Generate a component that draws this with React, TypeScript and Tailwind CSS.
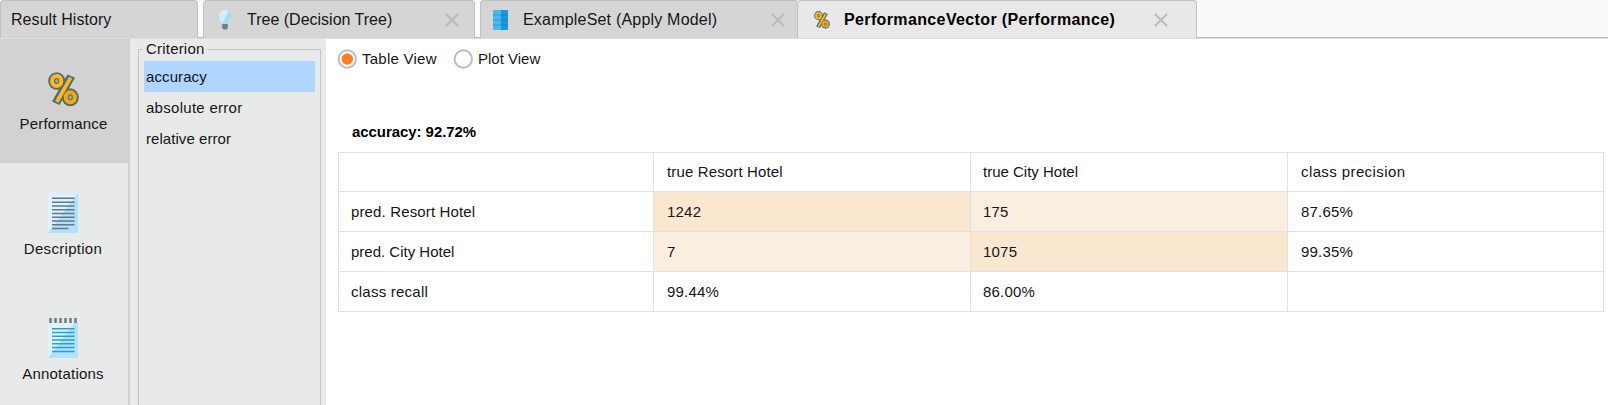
import React from "react";

const tabBase =
  "flex h-[38px] shrink-0 items-center rounded-t-[4px] border-x border-t border-[#c0c0c0] text-[16px] leading-[20px]";

function Bulb() {
  return (
    <svg width="14" height="22" viewBox="0 0 14 22">
      <path d="M7 1C3.400 1 1 3.500 1 7c0 2.700 1.500 4.300 2.500 6.300L4.200 16h5.600l.7-2.700C11.500 11.300 13 9.700 13 7c0-3.500-2.400-6-6-6z" fill="#a9dcf5" />
      <path d="M7 1C3.400 1 1 3.500 1 7c0 2.700 1.500 4.300 2.500 6.300L4 15 10.500 2C9.500 1.300 8.300 1 7 1z" fill="#d4effb" />
      <path d="M4.200 15h5.600v4L8.500 20.500h-3L4.200 19z" fill="#6d7e88" />
    </svg>
  );
}

function Sheet() {
  return (
    <svg width="15" height="20" viewBox="0 0 15 20">
      <path d="M0 0h8v20H0z" fill="#4db8ec" />
      <path d="M8 0h7v20H8z" fill="#1799dd" />
      <path d="M0 5h8M0 10h8M0 15h8" stroke="#2f9dd5" />
      <path d="M8 5h7M8 10h7M8 15h7" stroke="#0d86cb" />
    </svg>
  );
}

function Percent({ className }: { className: string }) {
  return (
    <svg className={className} viewBox="0 0 31 35" fill="none">
      <path d="M19.500 2.500l7.500 3.200L11.500 33l-7.500-3.500z" fill="#546b75" />
      <ellipse cx="8.700" cy="9" rx="8.500" ry="8.800" fill="#546b75" />
      <ellipse cx="22.300" cy="25.300" rx="8.500" ry="9" fill="#546b75" />
      <path d="M21 4.800l3.300 1.700L10.500 30.700l-3.300-1.700z" fill="#f9b91f" />
      <ellipse cx="8.700" cy="9" rx="4.600" ry="5" stroke="#f9b91f" strokeWidth="4" />
      <ellipse cx="22.300" cy="25.300" rx="4.600" ry="5" stroke="#f6ab0c" strokeWidth="4" />
      <ellipse cx="8.700" cy="9" rx="1.900" ry="2.300" fill="#a9aaa0" stroke="#66726c" />
      <ellipse cx="22.300" cy="25.300" rx="1.900" ry="2.300" fill="#a9aaa0" stroke="#66726c" />
    </svg>
  );
}

function Page({ notes }: { notes?: boolean }) {
  return (
    <svg width="30" height="40" viewBox="0 0 30 40">
      <path d="M0 0h30v40H0z" fill="#b3e1f8" />
      <path d="M0 0h30L0 40z" fill="#def2fc" />
      {notes ? (
        <>
          <path d="M0 0h30v5H0z" fill="#e8eaea" />
          <path d="M2.500 0v5M7.500 0v5M12.500 0v5M17.500 0v5M22.500 0v5M27.500 0v5" stroke="#697d87" strokeWidth="2.500" />
          <path d="M4 10.700h22.500M4 14.500h22.500M4 18.300h22.500M4 22h22.500M4 25.800h22.500M4 29.500h22.500M4 33.500h22.500" stroke="#239edf" strokeWidth="1.500" />
        </>
      ) : (
        <path d="M4 5.300h22.500M4 9.200h22.500M4 12.900h22.500M4 16.700h22.500M4 20.500h22.500M4 24.300h22.500M4 28h22.500M4 31.800h22.500M4 35.500h16.500" stroke="#607a87" strokeWidth="1.500" />
      )}
    </svg>
  );
}

function Close() {
  return (
    <svg width="14" height="14" viewBox="0 0 14 14" stroke="#bcbcbc" strokeWidth="2.200">
      <path d="M1 1l12 12M13 1L1 13" />
    </svg>
  );
}

function Radio({ checked }: { checked?: boolean }) {
  return (
    <svg width="20" height="20" viewBox="0 0 20 20">
      <circle cx="10.300" cy="10" r="8.700" fill="#fff" stroke="#bdbdbd" strokeWidth="2" />
      {checked && <circle cx="10.300" cy="10" r="5.800" fill="#ff7e26" />}
    </svg>
  );
}

const strong = "bg-[#fae7cf]";
const soft = "bg-[#f9eee0]";
const rows = [
  [["", ""], ["true Resort Hotel", "tracking-[0.140px]"], ["true City Hotel", "tracking-[0px]"], ["class precision", "tracking-[0.400px]"]],
  [["pred. Resort Hotel", "tracking-[0.140px]"], ["1242", strong], ["175", soft], ["87.65%", ""]],
  [["pred. City Hotel", "tracking-[0px]"], ["7", soft], ["1075", strong], ["99.35%", ""]],
  [["class recall", "tracking-[0.240px]"], ["99.44%", ""], ["86.00%", ""], ["", ""]],
];

export default function App() {
  return (
    <div className="flex h-[405px] w-[1611px] flex-col overflow-hidden bg-white font-['Liberation_Sans',Arial,sans-serif] text-[15px] leading-[20px] tracking-[0.2px] text-[#161616]">
      <header className="flex h-[39px] w-[1608px] shrink-0 border-b border-[#dedede] bg-[#fafafa]">
        <div className="flex w-full border-b border-[#b8b8b8]">
          <div className={`${tabBase} w-[198px] bg-[#d5d5d5] pl-[10px] tracking-[0.060px]`}>Result History</div>
          <div className={`${tabBase} ml-[5px] w-[272px] bg-[#d5d5d5] pl-[14px] tracking-[0px]`}>
            <Bulb />
            <span className="ml-[15px] w-[198px]">Tree (Decision Tree)</span>
            <Close />
          </div>
          <div className={`${tabBase} ml-[5px] w-[317px] rounded-tr-none border-r-0 bg-[#d5d5d5] pl-[12px]`}>
            <Sheet />
            <span className="ml-[15px] w-[248px]">ExampleSet (Apply Model)</span>
            <Close />
          </div>
          <div className={`${tabBase} w-[400px] bg-[#e8e8e8] pl-[16px] font-bold tracking-[0.370px] text-black`}>
            <Percent className="h-[18px] w-[16px]" />
            <span className="ml-[14px] w-[310px]">PerformanceVector (Performance)</span>
            <Close />
          </div>
        </div>
      </header>
      <div className="flex min-h-0 flex-1">
        <nav className="flex w-[130px] shrink-0 flex-col border-r-2 border-[#cfd1d0] bg-[#e8eaea] text-center">
          <div className="flex h-[124px] shrink-0 flex-col items-center bg-[#d1d2d1] pt-[33px] pr-[1px]">
            <Percent className="h-[35px] w-[31px]" />
            <span className="mt-[7px]">Performance</span>
          </div>
          <div className="flex h-[125px] shrink-0 flex-col items-center pt-[30px] pr-[2px]">
            <Page />
            <span className="mt-[6px] tracking-[0.300px]">Description</span>
          </div>
          <div className="flex flex-col items-center pt-[30px] pr-[2px]">
            <Page notes />
            <span className="mt-[6px]">Annotations</span>
          </div>
        </nav>
        <aside className="w-[196px] shrink-0 bg-[#e8eaea] pl-[8px]">
          <fieldset className="h-[380px] w-[183px] border border-[#c2c4c4] px-[5px]">
            <legend className="ml-[-1px] px-[3px] leading-[20px]">Criterion</legend>
            <ul className="mt-[2px] w-[171px]">
              <li className="h-[31px] bg-[#b0d5ff] pt-[6px] pl-[2px] tracking-[0.100px]">accuracy</li>
              <li className="h-[31px] pt-[6px] pl-[2px] tracking-[0.280px]">absolute error</li>
              <li className="h-[31px] pt-[6px] pl-[2px] tracking-[0.060px]">relative error</li>
            </ul>
          </fieldset>
        </aside>
        <main className="flex-1 pl-[11px]">
          <div className="flex h-[40px] items-center">
            <Radio checked />
            <span className="ml-[5px] w-[91px] tracking-[0.250px]">Table View</span>
            <Radio />
            <span className="ml-[5px] tracking-[0px]">Plot View</span>
          </div>
          <p className="mt-[43px] ml-[15px] font-bold tracking-[-0.060px] text-black">accuracy: 92.72%</p>
          <div className="mt-[10px] ml-[1px] w-[1266px] border-t border-l border-[#e2e2e2]">
            {rows.map((row, i) => (
              <div
                key={i}
                className={`grid grid-cols-[315px_317px_317px_316px] ${i === 0 ? "h-[39px]" : "h-[40px]"}`}
              >
                {row.map(([text, style], j) => (
                  <div
                    key={j}
                    className={`flex items-center border-r border-b border-[#e2e2e2] ${j === 0 || j === 2 ? "pl-[12px]" : "pl-[13px]"} ${style}`}
                  >
                    {text}
                  </div>
                ))}
              </div>
            ))}
          </div>
        </main>
      </div>
    </div>
  );
}
